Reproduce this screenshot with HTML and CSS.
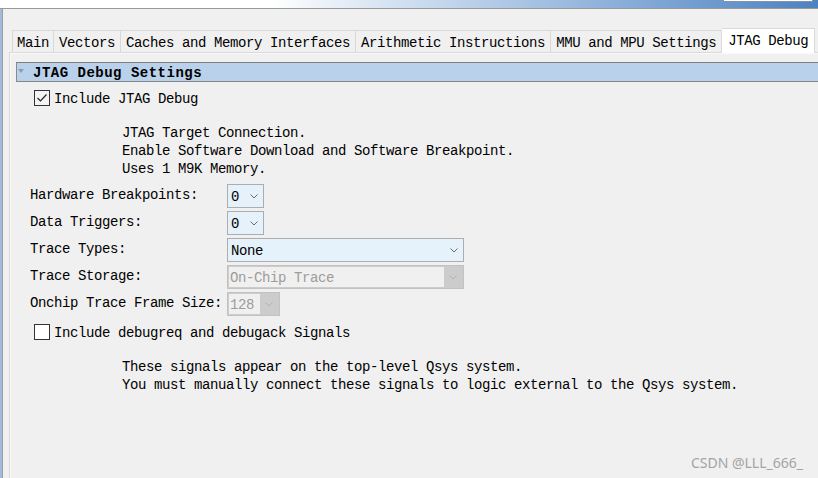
FILE: index.html
```html
<!DOCTYPE html>
<html>
<head>
<meta charset="utf-8">
<link rel="stylesheet" href="styles.css">
</head>
<body>
<div class="titlebar">
  <span class="ttext">_ &nbsp; &nbsp;28</span>
  <div class="tbox"></div>
</div>
<div class="frame">
  <div class="frame-inner">
    <div class="tabs">
      <div class="tab first">Main</div>
      <div class="tab">Vectors</div>
      <div class="tab">Caches and Memory Interfaces</div>
      <div class="tab">Arithmetic Instructions</div>
      <div class="tab">MMU and MPU Settings</div>
      <div class="tab active">JTAG Debug</div>
    </div>
    <div class="panel">
      <div class="section-head">
        <svg class="tri" width="6" height="4" viewBox="0 0 6 4"><polygon points="0,0 6,0 3,4" fill="#8c9cb0"/></svg>
        <span class="section-title">JTAG Debug Settings</span>
      </div>
      <div class="check-row first-check">
        <span class="checkbox"><svg width="14" height="14" viewBox="0 0 14 14"><polyline points="2.5,7 5.5,10 11.5,3.5" fill="none" stroke="#222" stroke-width="1.2"/></svg></span>
        <span class="check-label">Include JTAG Debug</span>
      </div>
      <div class="desc">
        <div>JTAG Target Connection.</div>
        <div>Enable Software Download and Software Breakpoint.</div>
        <div>Uses 1 M9K Memory.</div>
      </div>
      <div class="form">
        <div class="label">Hardware Breakpoints:</div>
        <div class="combo w37"><span>0</span><svg class="chev" width="8" height="5" viewBox="0 0 8 5"><polyline points="0.5,0.5 4,4 7.5,0.5" fill="none" stroke="#6a6a6a" stroke-width="1"/></svg></div>
        <div class="label">Data Triggers:</div>
        <div class="combo w37"><span>0</span><svg class="chev" width="8" height="5" viewBox="0 0 8 5"><polyline points="0.5,0.5 4,4 7.5,0.5" fill="none" stroke="#6a6a6a" stroke-width="1"/></svg></div>
        <div class="label">Trace Types:</div>
        <div class="combo w237"><span>None</span><svg class="chev" width="8" height="5" viewBox="0 0 8 5"><polyline points="0.5,0.5 4,4 7.5,0.5" fill="none" stroke="#6a6a6a" stroke-width="1"/></svg></div>
        <div class="label">Trace Storage:</div>
        <div class="combo disabled w237"><span class="field">On-Chip Trace</span><span class="arrow"><svg width="8" height="5" viewBox="0 0 8 5"><polyline points="0.5,0.5 4,4 7.5,0.5" fill="none" stroke="#b2b2b2" stroke-width="1"/></svg></span></div>
        <div class="label">Onchip Trace Frame Size:</div>
        <div class="combo disabled w53"><span class="field">128</span><span class="arrow"><svg width="8" height="5" viewBox="0 0 8 5"><polyline points="0.5,0.5 4,4 7.5,0.5" fill="none" stroke="#b2b2b2" stroke-width="1"/></svg></span></div>
      </div>
      <div class="check-row second-check">
        <span class="checkbox"></span>
        <span class="check-label">Include debugreq and debugack Signals</span>
      </div>
      <div class="desc">
        <div>These signals appear on the top-level Qsys system.</div>
        <div>You must manually connect these signals to logic external to the Qsys system.</div>
      </div>
    </div>
  </div>
</div>
<div class="watermark">CSDN @LLL_666_</div>
</body>
</html>
```
FILE: styles.css
```css
html, body {
  margin: 0;
  padding: 0;
}
body {
  width: 818px;
  height: 478px;
  overflow: hidden;
  background: #f0f0f0;
  display: flex;
  flex-direction: column;
  font-family: "Liberation Mono", "DejaVu Sans Mono", monospace;
  font-size: 14px;
  letter-spacing: -0.4px;
  color: #000;
  position: relative;
}
.titlebar {
  height: 8px;
  flex: none;
  border-bottom: 1px solid #9a9a9a;
  background: linear-gradient(90deg, #ffffff 0%, #ffffff 33%, #c9daee 52%, #8cb0da 75%, #4d81c1 100%);
  display: flex;
  overflow: hidden;
}
.ttext {
  margin-left: 55px;
  margin-top: -12px;
  line-height: 14px;
  height: 14px;
  font-size: 15px;
  color: #333;
}
.tbox {
  margin-left: auto;
  margin-right: 5px;
  width: 88px;
  height: 1px;
  background: #fff;
  border: 1px solid #7f93ad;
  border-top: none;
}
.frame {
  flex: 1;
  display: flex;
  border-left: 2px solid #a2badb;
}
.frame-inner {
  flex: 1;
  border-left: 1px solid #9c9c9c;
  display: flex;
  flex-direction: column;
}
.tabs {
  height: 43px;
  flex: none;
  display: flex;
  align-items: flex-end;
  padding-left: 9px;
}
.tab {
  height: 22px;
  box-sizing: border-box;
  border-top: 1px solid #d9d9d9;
  border-right: 1px solid #d9d9d9;
  padding: 2px 5px 0 5px;
  line-height: 20px;
  background: #f0f0f0;
  white-space: nowrap;
}
.tab.first {
  border-left: 1px solid #d9d9d9;
  padding: 2px 4px 0 4px;
}
.tab.active {
  height: 25px;
  margin-bottom: -1px;
  background: #fff;
  line-height: 22px;
  padding: 1px 6px 0 6px;
  position: relative;
  z-index: 1;
  border-right: 1px solid #d9d9d9;
}
.panel {
  flex: 1;
  margin-left: 6px;
  border-top: 1px solid #d9d9d9;
  border-left: 1px solid #d9d9d9;
  box-shadow: inset 1px 1px 0 #fafafa;
  display: flex;
  flex-direction: column;
}
.section-head {
  margin-top: 9px;
  margin-left: 6px;
  height: 20px;
  box-sizing: border-box;
  border-top: 1px solid #7e7e7e;
  border-bottom: 1px solid #868686;
  border-left: 1px solid #8a8a8a;
  background: #b9d1ea;
  display: flex;
  align-items: flex-start;
}
.tri {
  margin-left: 1px;
  margin-top: 6px;
}
.section-title {
  margin-left: 9px;
  margin-top: 1px;
  font-weight: bold;
  letter-spacing: 0.5px;
  line-height: 18px;
  height: 17px;
  color: #000;
}
.check-row {
  height: 18px;
  display: flex;
  align-items: flex-start;
  padding-left: 24px;
}
.first-check { margin-top: 7px; }
.second-check { margin-top: 7px; }
.checkbox {
  width: 16px;
  height: 16px;
  box-sizing: border-box;
  border: 1px solid #333;
  background: #fff;
  margin-top: 1px;
  display: flex;
}
.first-check .checkbox { background: #f4f4f4; }
.check-label {
  margin-left: 4px;
  padding-top: 1px;
  line-height: 18px;
  height: 17px;
}
.desc {
  margin-top: 16px;
  padding-left: 112px;
  padding-top: 1px;
  line-height: 18px;
}
.desc div { height: 18px; }
.form {
  margin-top: 6px;
  padding-left: 20px;
  display: grid;
  grid-template-columns: 197px auto;
  grid-auto-rows: 24px;
  row-gap: 3px;
  justify-items: start;
}
.label {
  line-height: 18px;
  padding-top: 2px;
}
.combo {
  height: 24px;
  box-sizing: border-box;
  border: 1px solid #adadad;
  background: #e5f1fb;
  display: flex;
  align-items: center;
  justify-content: space-between;
  padding: 2px 5px 0 3px;
}
.combo .chev { margin-top: -2px; }
.w37 { width: 37px; }
.w237 { width: 237px; }
.w53 { width: 53px; }
.chev { flex: none; }
.combo.disabled {
  background: #cccccc;
  border: 1px solid #c2c2c2;
  padding: 1px;
  align-items: stretch;
}
.field {
  flex: 1;
  background: #f0f0f0;
  color: #9c9c9c;
  padding-left: 1px;
  padding-top: 1px;
  line-height: 20px;
}
.arrow {
  width: 18px;
  flex: none;
  display: flex;
  align-items: center;
  justify-content: center;
}
.watermark {
  position: absolute;
  right: 15px;
  bottom: 6px;
  font-family: "Noto Sans", "Liberation Sans", sans-serif;
  font-size: 14px;
  letter-spacing: 0;
  color: #a4a4a4;
  line-height: 18px;
}
```
